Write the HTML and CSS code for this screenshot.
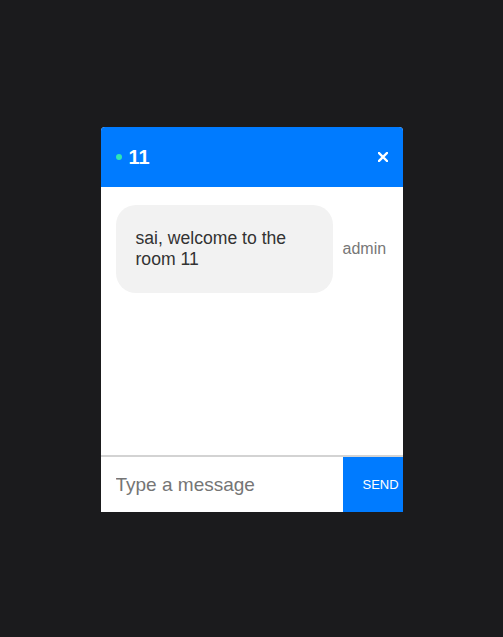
FILE: index.html
```html
<!DOCTYPE html>
<html>
<head>
<meta charset="utf-8">
<link rel="stylesheet" href="styles.css">
</head>
<body>
<div class="page">
  <div class="chat">
    <div class="chat-header">
      <div class="room">
        <span class="dot"></span>
        <span class="room-name">11</span>
      </div>
      <svg class="close" width="10" height="10" viewBox="0 0 10 10"><path d="M1 1L9 9M9 1L1 9" stroke="#fff" stroke-width="2.4" stroke-linecap="square"/></svg>
    </div>
    <div class="chat-body">
      <div class="msg-row">
        <div class="bubble">sai, welcome to the room 11</div>
        <div class="author">admin</div>
      </div>
    </div>
    <div class="chat-footer">
      <input class="msg-input" type="text" placeholder="Type a message">
      <button class="send">SEND</button>
    </div>
  </div>
</div>
</body>
</html>
```
FILE: styles.css
```css
html, body {
  margin: 0;
  padding: 0;
  background: #1b1b1d;
  font-family: "Liberation Sans", Arial, sans-serif;
}
.page {
  box-sizing: border-box;
  width: 503px;
  height: 637px;
  padding-top: 2px;
  display: flex;
  align-items: center;
  justify-content: center;
}
.chat {
  width: 302px;
  height: 385px;
  background: #fff;
  border-radius: 4px 4px 0 0;
  overflow: hidden;
  display: flex;
  flex-direction: column;
}
.chat-header {
  height: 60px;
  flex: none;
  background: #007bff;
  display: flex;
  align-items: center;
  justify-content: space-between;
  padding: 0 15px;
}
.room {
  display: flex;
  align-items: center;
  gap: 7px;
}
.dot {
  width: 6px;
  height: 6px;
  border-radius: 50%;
  background: #2ee6b4;
}
.room-name {
  color: #fff;
  font-weight: bold;
  font-size: 20px;
}
.close {
  display: block;
}
.chat-body {
  flex: 1;
  padding: 18px 15px 0 15px;
}
.msg-row {
  display: flex;
  align-items: center;
  gap: 10px;
}
.bubble {
  width: 177px;
  padding: 23px 20px;
  background: #f2f2f2;
  border-radius: 20px;
  color: #333;
  font-size: 17.6px;
  line-height: 21px;
}
.author {
  color: #777;
  font-size: 16px;
}
.chat-footer {
  height: 55px;
  flex: none;
  border-top: 2px solid #d3d3d3;
  display: flex;
}
.msg-input {
  flex: 1;
  min-width: 0;
  border: none;
  outline: none;
  padding: 0 15px;
  font-family: "Liberation Sans", Arial, sans-serif;
  font-size: 19px;
  color: #333;
  background: #fff;
}
.msg-input::placeholder {
  color: #757575;
}
.send {
  width: 60px;
  flex: none;
  border: none;
  background: #007bff;
  color: #fff;
  font-family: "Liberation Sans", Arial, sans-serif;
  font-size: 13px;
  text-align: left;
  padding: 0 0 0 20px;
  white-space: nowrap;
  overflow: hidden;
}
```
